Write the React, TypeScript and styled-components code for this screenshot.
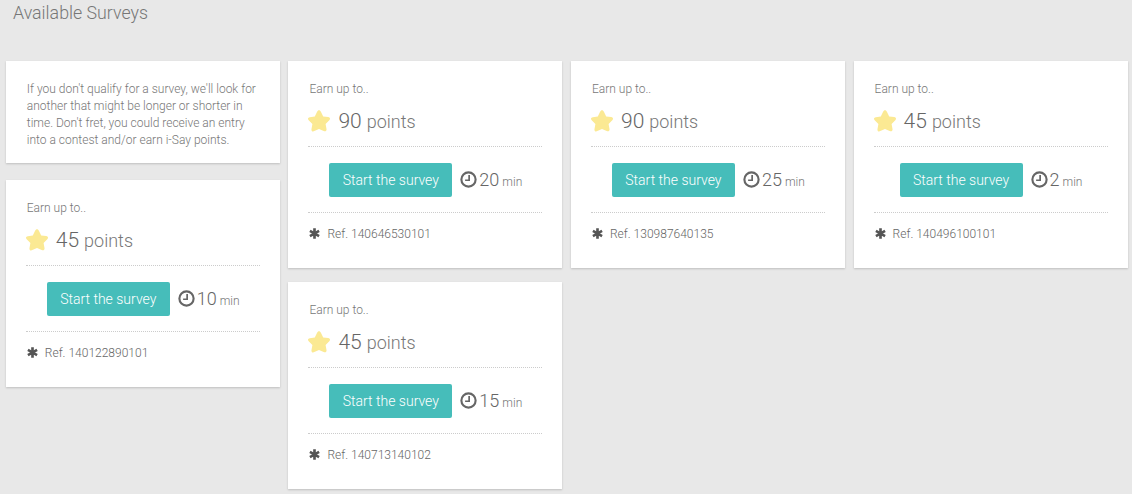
import styled, { createGlobalStyle } from "styled-components";

interface ISurvey {
  points: number;
  minutes: number;
  ref: string;
}

const GlobalStyle = createGlobalStyle`
  html, body {
    margin: 0;
    padding: 0;
    background-color: #e8e8e8;
  }
  body {
    font-family: Roboto, "Liberation Sans", sans-serif;
    font-weight: 300;
    overflow: hidden;
  }
  * {
    box-sizing: border-box;
  }
`;

const Page = styled.div`
  width: 1132px;
  height: 494px;
  padding: 2px 4px 0 5.8px;
  overflow: hidden;
`;

const Title = styled.h1`
  margin: 0 0 0 7.2px;
  height: 59px;
  font-size: 17.8px;
  line-height: 22px;
  font-weight: 300;
  color: #777;
`;

const Columns = styled.div`
  display: grid;
  grid-template-columns: repeat(4, 274px);
  column-gap: 8.6px;
`;

const Column = styled.div<{ $gap: number }>`
  display: flex;
  flex-direction: column;
  gap: ${(p) => p.$gap}px;
`;

const Card = styled.div`
  background-color: #fff;
  box-shadow: 0 1px 2px rgba(0, 0, 0, 0.18);
`;

const NoteCard = styled(Card)`
  height: 102px;
  padding: 19.7px 21px 0;
  font-size: 12px;
  line-height: 17.14px;
  color: #777;
`;

const SurveyCard = styled(Card)`
  height: 207px;
  padding: 21px 20px 0;
`;

const EarnLabel = styled.div`
  font-size: 12px;
  line-height: 14px;
  color: #777;
  margin-left: 1px;
`;

const PointsRow = styled.div`
  display: flex;
  align-items: center;
  height: 51px;
  border-bottom: 1px dotted #ccc;
`;

const Star = styled.svg`
  width: 22px;
  height: 22px;
  margin-right: 8px;
  flex: none;
`;

const PointsValue = styled.span`
  font-size: 21px;
  color: #666;
`;

const PointsUnit = styled.span`
  font-size: 18px;
  color: #777;
  margin-left: 5px;
`;

const ActionRow = styled.div`
  display: flex;
  justify-content: center;
  align-items: center;
  gap: 8px;
  height: 66px;
  padding-left: 0.8px;
  border-bottom: 1px dotted #ccc;
`;

const StartButton = styled.button`
  width: 123px;
  height: 34px;
  padding: 0;
  border: 0;
  border-radius: 2px;
  background-color: #46bdba;
  color: #fff;
  font-family: inherit;
  font-size: 14px;
  font-weight: 300;
  cursor: pointer;
`;

const Duration = styled.div`
  display: flex;
  align-items: baseline;
  color: #666;
`;

const Clock = styled.svg`
  width: 17px;
  height: 17px;
  margin-right: 2px;
  align-self: center;
`;

const DurationValue = styled.span`
  font-size: 18px;
`;

const DurationUnit = styled.span`
  font-size: 12px;
  color: #777;
  margin-left: 3px;
`;

const RefRow = styled.div`
  display: flex;
  align-items: center;
  height: 41px;
  font-size: 12px;
  color: #666;
`;

const RefMark = styled.svg`
  width: 11px;
  height: 11px;
  margin-left: 1px;
  margin-right: 7px;
`;

const leftSurvey: ISurvey = { points: 45, minutes: 10, ref: "140122890101" };
const middleSurveys: ISurvey[] = [
  { points: 90, minutes: 20, ref: "140646530101" },
  { points: 45, minutes: 15, ref: "140713140102" },
];
const thirdSurvey: ISurvey = { points: 90, minutes: 25, ref: "130987640135" };
const fourthSurvey: ISurvey = { points: 45, minutes: 2, ref: "140496100101" };

function SurveyItem({ points, minutes, ref }: ISurvey) {
  return (
    <SurveyCard>
      <EarnLabel>Earn up to..</EarnLabel>
      <PointsRow>
        <Star viewBox="1 1 22 22">
          <path
            d="M12 1.2c.9 0 1.5.7 1.9 1.5l2.3 4.7 5 .7c1.9.3 2.4 1.8 1.1 3.1l-3.7 3.7.9 5.1c.3 1.9-1 2.9-2.8 2L12 20l-4.7 2.1c-1.8.9-3.1-.1-2.8-2l.9-5.1-3.7-3.7c-1.3-1.3-.8-2.8 1.1-3.1l5-.7 2.3-4.7c.4-.8 1-1.5 1.9-1.5z"
            fill="#fbe993"
          />
        </Star>
        <PointsValue>{points}</PointsValue>
        <PointsUnit>points</PointsUnit>
      </PointsRow>
      <ActionRow>
        <StartButton type="button">Start the survey</StartButton>
        <Duration>
          <Clock viewBox="0 0 16 16">
            <circle cx="8" cy="8" r="6.7" fill="none" stroke="#666" strokeWidth="2" />
            <path d="M8.6 3.8v4.9H4.8" fill="none" stroke="#666" strokeWidth="1.6" />
          </Clock>
          <DurationValue>{minutes}</DurationValue>
          <DurationUnit>min</DurationUnit>
        </Duration>
      </ActionRow>
      <RefRow>
        <RefMark viewBox="0 0 12 12">
          <path
            d="M6 .4v11.2M1 3.2l10 5.6M11 3.2L1 8.8"
            fill="none"
            stroke="#555"
            strokeWidth="2.9"
          />
        </RefMark>
        Ref. {ref}
      </RefRow>
    </SurveyCard>
  );
}

export default function App() {
  return (
    <Page>
      <GlobalStyle />
      <Title>Available Surveys</Title>
      <Columns>
        <Column $gap={17}>
          <NoteCard>
            If you don't qualify for a survey, we'll look for another that might
            be longer or shorter in time. Don't fret, you could receive an entry
            into a contest and/or earn i-Say points.
          </NoteCard>
          <SurveyItem {...leftSurvey} />
        </Column>
        <Column $gap={14}>
          {middleSurveys.map((s) => (
            <SurveyItem key={s.ref} {...s} />
          ))}
        </Column>
        <Column $gap={14}>
          <SurveyItem {...thirdSurvey} />
        </Column>
        <Column $gap={14}>
          <SurveyItem {...fourthSurvey} />
        </Column>
      </Columns>
    </Page>
  );
}
